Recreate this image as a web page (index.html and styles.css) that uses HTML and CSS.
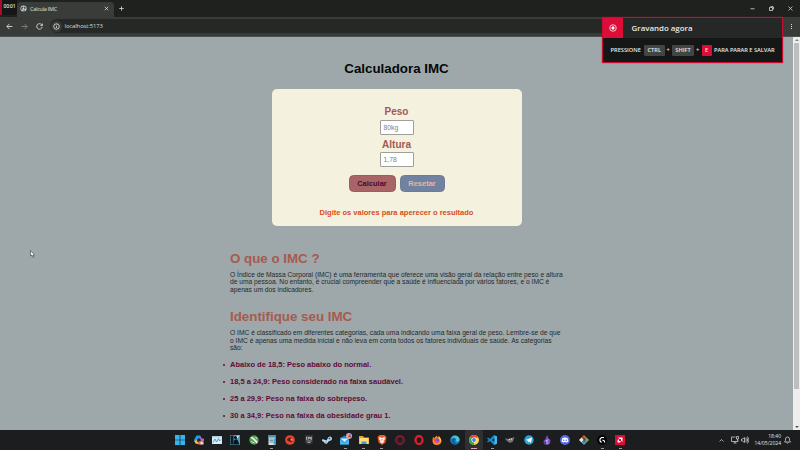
FILE: index.html
```html
<!DOCTYPE html>
<html lang="pt-BR">
<head>
<meta charset="utf-8">
<title>Calcula IMC</title>
<link rel="stylesheet" href="styles.css">
</head>
<body>
<div class="screen">
  <header class="tabs">
    <div class="profile"><span>00:01</span></div>
    <div class="tab">
      <svg class="globe" viewBox="0 0 16 16"><circle cx="8" cy="8" r="7" fill="#cfd2d4"/><path d="M3 5l4-2 1 3-3 2 1 3-2 1-2-4zM10 3l3 2v3l-3 1-1-3zM8 11l3-1-1 4-2 1z" fill="#4b4f52"/></svg>
      <span>Calcula IMC</span>
      <svg class="x" viewBox="0 0 10 10"><path d="M1.5 1.5l7 7m0-7l-7 7"/></svg>
    </div>
    <svg class="plus" viewBox="0 0 10 10"><path d="M5 .5v9M.5 5h9"/></svg>
    <div class="winctl">
      <svg viewBox="0 0 10 10"><path d="M1 5.5h8"/></svg>
      <svg viewBox="0 0 10 10"><path d="M1 3h6v6H1zM3 1h5l1 1v5"/></svg>
      <svg viewBox="0 0 10 10"><path d="M1 1l8 8m0-8L1 9"/></svg>
    </div>
  </header>
  <nav class="toolbar">
    <svg viewBox="0 0 12 12"><path d="M11 6H1.5M6 1.5L1.5 6 6 10.500"/></svg>
    <svg class="dim" viewBox="0 0 12 12"><path d="M1 6h9.500M6 1.500L10.500 6 6 10.500"/></svg>
    <svg viewBox="0 0 12 12"><path d="M10.500 7A4.700 4.700 0 1 1 9.500 2.800L10.800 4M10.900 1v3.500H7.500"/></svg>
    <div class="address">
      <div class="info"><svg viewBox="0 0 12 12"><circle cx="6" cy="6" r="4.700"/><path d="M6 5.500v3M6 3v1"/></svg></div>
      <span>localhost:5173</span>
    </div>
    <div class="menu"><i></i><i></i><i></i></div>
  </nav>
  <div class="viewport">
    <main class="page">
      <h1>Calculadora IMC</h1>
      <form class="card">
        <label>Peso</label>
        <div class="field">80kg</div>
        <label class="second">Altura</label>
        <div class="field">1,78</div>
        <div class="buttons">
          <button type="button" class="calc">Calcular</button>
          <button type="button" class="reset">Resetar</button>
        </div>
        <p class="result">Digite os valores para aperecer o resultado</p>
      </form>
      <section class="text">
        <h2>O que o IMC ?</h2>
        <p>O Índice de Massa Corporal (IMC) é uma ferramenta que oferece uma visão geral da relação entre peso e altura<br>de uma pessoa. No entanto, é crucial compreender que a saúde é influenciada por vários fatores, e o IMC é<br>apenas um dos indicadores.</p>
        <h2 class="identify">Identifique seu IMC</h2>
        <p>O IMC é classificado em diferentes categorias, cada uma indicando uma faixa geral de peso. Lembre-se de que<br>o IMC é apenas uma medida inicial e não leva em conta todos os fatores individuais de saúde. As categorias<br>são:</p>
        <ul>
          <li>Abaixo de 18,5: Peso abaixo do normal.</li>
          <li>18,5 a 24,9: Peso considerado na faixa saudável.</li>
          <li>25 a 29,9: Peso na faixa do sobrepeso.</li>
          <li>30 a 34,9: Peso na faixa da obesidade grau 1.</li>
          <li>35 a 39,9: Peso na faixa da obesidade grau 2.</li>
        </ul>
      </section>
    </main>
    <div class="scroll"><b class="up"></b><i></i><b class="down"></b></div>
  </div>
  <footer class="taskbar">
    <div class="apps">
      <div class="app"><svg viewBox="0 0 20 20"><path d="M0 0h9.300v9.300H0zM10.700 0H20v9.300h-9.300zM0 10.700h9.300V20H0zM10.700 10.700H20V20h-9.300z" fill="#36b4ee"/></svg></div>
      <div class="app"><svg viewBox="0 0 20 20"><path d="M5 1h7l3 6H8L5 14H1q-2-2 0-6z" fill="#219be8"/><path d="M12 1l3 6h4q2 2 0 6l-3 1-4-7z" fill="#b66bd8"/><path d="M1 12l5-2 4 8H6q-4 0-5-6z" fill="#f2bd35"/><path d="M9 12l6-1 4 1-3 7H8z" fill="#ef704c"/><path d="M8 8h4l-1 5H6z" fill="#24272a"/><path d="M13 14h6v5h-6z" fill="#e8d5cd"/></svg></div>
      <div class="app"><svg viewBox="0 0 20 20"><path d="M0 2h20v16H0z" fill="#d9edf5"/><path d="M0 2h20v3H0z" fill="#b4cfdf"/><path d="M2 15l4-7 3 6 4-7 2 5 3-3" fill="none" stroke="#2589bb" stroke-width="1.500"/></svg></div>
      <div class="app"><svg viewBox="0 0 20 20"><path d="M0 0h20v20H0z" fill="#4c9cb5"/><path d="M1 1h6v18H1z" fill="#101b22"/><path d="M7 19l1-8 4-3 3 2 4 9z" fill="#0a1219"/><circle cx="11" cy="5" r="3" fill="#111"/><path d="M13 2l5-1-3 6z" fill="#e8f3f6"/></svg></div>
      <div class="app"><svg viewBox="0 0 20 20"><circle cx="10" cy="10" r="9.500" fill="#4f9d50"/><path d="M2 5q6-3 9 2l7 7-3 3-6-7z" fill="#e8eee3"/><path d="M4 13l7 3m2-12l3 4" stroke="#d9ebd5" stroke-width="2"/></svg></div>
      <div class="app run"><svg viewBox="0 0 20 20"><path d="M3 0h14v20H3z" fill="#d3e3ec"/><path d="M3 0h14v5H3z" fill="#3d94bd"/><path d="M5 8h7M5 11h7M5 14h7" stroke="#5b7180" stroke-width="1.500"/><path d="M13 7h4v12h-4z" fill="#3ba3d2"/></svg></div>
      <div class="app"><svg viewBox="0 0 20 20"><circle cx="10" cy="10" r="9.700" fill="#e5442e"/><path d="M4 10q1-5 7-5l3 2q-4 0-4 3l5 3q-5 3-11-3" fill="#571b17"/><path d="M11 7l5 2-3 3z" fill="#ff9b63"/></svg></div>
      <div class="app"><svg viewBox="0 0 20 20"><path d="M2 0h16v16l-8 4-8-4z" fill="#313335"/><path d="M5 4v5m0-5h2M5 6h2M5 9h2M9 9V4h2v3H9M13 4v5M16 4h-1v5h1M5 12h10M7 15h6" fill="none" stroke="#eee" stroke-width="1.100"/></svg></div>
      <div class="app"><svg viewBox="0 0 20 20"><path d="M1 8l8 3 4-7q6-3 7 3 0 4-6 5l-4 5q-5 2-6-3L0 12z" fill="#bcdff4"/><circle cx="15" cy="7" r="2" fill="#326999"/><circle cx="8" cy="14" r="1.500" fill="#5c91bb"/></svg></div>
      <div class="app run"><svg viewBox="0 0 20 20"><path d="M0 6l9-5 9 5v13H0z" fill="#2286ce"/><path d="M1 7h16l-8 7z" fill="#e6f4fb"/><path d="M0 9l9 6 9-6v10H0z" fill="#43b8ef"/></svg><span class="badge">4</span></div>
      <div class="app run"><svg viewBox="0 0 20 20"><path d="M0 2h8l2 3h10v13H0z" fill="#e4a52e"/><path d="M1 6h18v12H1z" fill="#ffdb73"/><path d="M5 13h10v5H5z" fill="#3c9bd3"/></svg></div>
      <div class="app run"><svg viewBox="0 0 20 20"><path d="M5 0h10l4 4-2 11-7 5-7-5L1 4z" fill="#f05b2f"/><path d="M5 4l5 2 5-2 1 4-3 4 1 2-4 3-4-3 1-2-3-4z" fill="#fff2e9"/><path d="M8 8l2 1 2-1-2 4z" fill="#f05b2f"/></svg></div>
      <div class="app"><svg viewBox="0 0 20 20"><g fill="none" stroke="#951e3a"><circle cx="10" cy="10" r="8.500" stroke-width="2.500"/><ellipse cx="10" cy="10" rx="4.500" ry="7" stroke-width="1.500"/></g></svg></div>
      <div class="app"><svg viewBox="0 0 20 20"><ellipse cx="10" cy="10" rx="7" ry="8" fill="none" stroke="#e51b30" stroke-width="4.500"/></svg></div>
      <div class="app"><svg viewBox="0 0 20 20"><path d="M2 4l3 2 4-5 2 4 4-2 4 8q0 8-9 9Q0 20 1 9z" fill="#ff8b26"/><circle cx="10" cy="11" r="4.500" fill="#8949cf"/><path d="M2 6l8 2-3 3 5 2q-4 5-8 0z" fill="#ff513f"/><path d="M12 1l6 7v6l-4-7z" fill="#ffd245"/></svg></div>
      <div class="app"><svg viewBox="0 0 20 20"><circle cx="10" cy="10" r="9.500" fill="#1689cb"/><path d="M1 8q4-8 12-6 6 2 6 8-2 5-7 2 1-7-5-7-4 0-6 3" fill="#4fc2d1"/><path d="M3 10q4-5 9-1-5 1-2 6 4 3 7 1-7 7-13-1" fill="#155ba2"/></svg></div>
      <div class="app run active"><svg viewBox="0 0 20 20"><circle cx="10" cy="10" r="10" fill="#ffd04b"/><path d="M10 10L1.500 4.800A10 10 0 0 1 18.700 5H10z" fill="#e94238"/><path d="M1.500 4.800L10 14v6A10 10 0 0 1 1.500 4.800" fill="#31a853"/><circle cx="10" cy="10" r="5" fill="#fff"/><circle cx="10" cy="10" r="3.800" fill="#3e80dc"/></svg></div>
      <div class="app run"><svg viewBox="0 0 20 20"><path fill-rule="evenodd" d="M14 0l6 3v14l-6 3L6 12l-4 3-2-2 4-3-4-3 2-2 4 3zM15 6l-5 4 5 4z" fill="#168ed4"/><path d="M15 1l5 2v14l-5 3z" fill="#43b5ef"/></svg></div>
      <div class="app"><svg viewBox="0 0 20 20"><path d="M1 6l4 2 8-2 6-2-3 9-6 3-5-3-4-4z" fill="#77736c"/><circle cx="9" cy="9" r="1.500" fill="#ddd"/><circle cx="13" cy="8" r="1.500" fill="#ddd"/></svg></div>
      <div class="app"><svg viewBox="0 0 20 20"><circle cx="10" cy="10" r="9.500" fill="#2aa1da"/><path d="M3 10l13-5-2 11-4-3-2 2-1-4z" fill="#fff"/></svg></div>
      <div class="app"><svg viewBox="0 0 20 20"><path d="M10 0l3 7 4 3-1 7-5 3-7-2-1-6 4-4z" fill="#7953c4"/><path d="M7 11l7-3-4 6 4 2-6 2z" fill="#c0a6ef"/><path d="M4 13l5 1-2 5z" fill="#3f246d"/></svg></div>
      <div class="app"><svg viewBox="0 0 20 20"><circle cx="10" cy="10" r="10" fill="#5969e8"/><path d="M5 6q5-2 10 0l2 7-4 2-1-1H8l-1 1-4-2z" fill="#fff"/><circle cx="7.500" cy="10.500" r="1.500" fill="#5969e8"/><circle cx="12.500" cy="10.500" r="1.500" fill="#5969e8"/></svg></div>
      <div class="app"><svg viewBox="0 0 20 20"><path d="M10 0l5 5-5 5-5-5z" fill="#df5b43"/><path d="M5 5l5 5-5 5-5-5z" fill="#e8e8df"/><path d="M15 5l5 5-5 5-5-5z" fill="#71b45d"/><path d="M10 10l5 5-5 5-5-5z" fill="#5ba0c8"/><path d="M7 4l3 3v8m0-8l4 4" stroke="#222" stroke-width="1.500" fill="none"/></svg></div>
      <div class="app run"><svg viewBox="0 0 20 20"><circle cx="10" cy="10" r="10" fill="#050505"/><path d="M14 5H9l-3 3v4l3 3M11 10l4 2v3" fill="none" stroke="#fff" stroke-width="2.200"/></svg></div>
      <div class="app run"><svg viewBox="0 0 20 20"><path d="M0 0h20v20H0z" fill="#d90e35"/><path d="M6 5h9v9l-3-3V8H9zM5 10l3-2v4h4l-2 3H5z" fill="#fff"/></svg></div>
    </div>
    <div class="tray">
      <svg class="chev" viewBox="0 0 10 10"><path d="M1 7l4-4 4 4"/></svg>
      <svg class="net" viewBox="0 0 16 16"><path d="M9 2H1v9h13V8M5 14h6M8 11v3M11 1h4v5h-4zM13 6v3"/></svg>
      <svg class="vol" viewBox="0 0 16 16"><path d="M1 6h2l4-3v10l-4-3H1zM9 5q3 3 0 6M11 3q5 5 0 10M13 1q6 7 0 14"/></svg>
      <div class="clock">18:40<br>14/05/2024</div>
      <svg class="bell" viewBox="0 0 14 16"><path d="M1 12l2-3V6q0-4 4-4t4 4v3l2 3zM5 13q2 3 4 0"/></svg>
    </div>
  </footer>
  <aside class="recorder">
    <div class="rec-head">
      <div class="rec-icon"><svg viewBox="0 0 16 16"><circle cx="8" cy="8" r="6.500"/><circle cx="8" cy="8" r="2.500" fill="#fff"/></svg></div>
      <span>Gravando agora</span>
    </div>
    <div class="rec-body"><span class="press">PRESSIONE</span><kbd class="ctrl">CTRL</kbd><span class="sum">+</span><kbd class="shift">SHIFT</kbd><span class="sum">+</span><kbd class="key">E</kbd><span class="stop">PARA PARAR E SALVAR</span></div>
  </aside>
  <svg class="cursor" viewBox="0 0 10 16"><path d="M1 1v11l3-2 2 5 2-1-2-4h3z" fill="#fff" stroke="#222"/></svg>
</div>
</body>
</html>
```
FILE: styles.css
```css
* { box-sizing: border-box; }
body { margin: 0; overflow: hidden; }
h1, h2, p, ul { margin: 0; }
svg { display: block; flex: none; }
.screen { position: relative; width: 800px; height: 450px; display: flex; flex-direction: column; overflow: hidden; font-family: "Open Sans", "Noto Sans", sans-serif; }

.tabs { height: 17px; flex: none; display: flex; background: #1f211f; color: #dfe0df; }
.profile { width: 17px; height: 15px; border-left: 2px solid #a90d2d; border-radius: 0 0 4px 0; background: #151716; font-size: 5px; line-height: 12px; font-weight: 600; text-align: center; letter-spacing: -.2px; white-space: nowrap; }
.tab { width: 97px; height: 15px; margin-top: 2px; padding: 0 5px 2px 3px; border-radius: 4px 4px 0 0; background: #3a3c3a; display: flex; align-items: center; font-size: 5.500px; letter-spacing: -.25px; }
.globe { width: 7px; height: 7px; margin-right: 3px; }
.x { width: 5px; height: 5px; margin-left: auto; }
.x, .plus, .winctl svg { fill: none; stroke: #e0e1df; stroke-width: 1.500; }
.plus { width: 5px; height: 5px; margin: 6px 0 0 5px; }
.winctl { margin: 6px 7px 0 auto; display: flex; gap: 14px; }
.winctl svg { width: 5px; height: 5px; }

.toolbar { height: 20px; flex: none; display: flex; align-items: center; padding: 0 7px 1px 6px; gap: 8px; background: #393b39; border-bottom: 1px solid #4c504f; }
.toolbar svg { width: 7px; height: 7px; fill: none; stroke: #dcdedc; stroke-width: 1.500; }
.toolbar svg.dim { stroke: #858785; }
.address { flex: 1; height: 14px; border-radius: 7px; background: #262826; display: flex; align-items: center; gap: 2.500px; padding-left: 1px; color: #dadbda; font-size: 5.900px; letter-spacing: -.1px; margin-left: -1px; }
.info { width: 11px; height: 11px; border-radius: 50%; background: #393b39; display: grid; place-items: center; }
.menu { width: 3px; display: grid; gap: 1px; justify-items: center; }
.menu i { width: 1px; height: 1px; background: #ddd; }

.viewport { flex: 1; min-height: 0; display: flex; background: #9ea7a9; overflow: hidden; font-family: "Liberation Sans", Arial, sans-serif; }
.page { flex: 1; min-height: 0; padding-top: 24px; display: flex; flex-direction: column; align-items: center; }
.page > * { flex: none; }
h1 { color: #050708; font-size: 13.330px; line-height: 16px; }
.card { width: 250px; height: 137px; margin-top: 12px; padding-top: 17px; border-radius: 5px; background: #f4f1df; display: flex; flex-direction: column; align-items: center; }
.card label { color: #a15a58; font-weight: 700; font-size: 10px; line-height: 12px; }
.card label.second { margin-top: 4px; }
.field { width: 34px; height: 15px; margin-top: 1.500px; padding-left: 3px; border: 1px solid #a09f99; border-radius: 1px; background: #fff; color: #808186; font-size: 6.800px; line-height: 13px; }
.buttons { display: flex; gap: 4px; margin-top: 7.500px; }
button { height: 17px; padding: 0; border: 1px solid #6f6570; border-radius: 4.500px; font: 700 7.500px/15px "Liberation Sans", Arial, sans-serif; }
.calc { width: 47px; border-color: #9b5b5f; background: #a86466; color: #4b092d; }
.reset { width: 45px; border-color: #6d7b98; background: #7182a1; color: #e8b69d; }
.result { margin-top: 16px; color: #d94c21; font-size: 7.500px; font-weight: 700; line-height: 10px; }
.text { width: 333px; margin-top: 24.500px; white-space: nowrap; }
h2 { color: #a65b4e; font-size: 13.330px; line-height: 16px; }
.text p { margin-top: 4px; color: #222a2c; font-size: 6.680px; line-height: 7.600px; }
h2.identify { margin-top: 16px; }
ul { padding: 0; margin-top: 8px; list-style: none; }
li { position: relative; color: #610b35; font-weight: 700; font-size: 7.500px; line-height: 9px; margin-bottom: 8px; }
li::before { content: ""; position: absolute; left: -7px; top: 4px; width: 2px; height: 2px; border-radius: 50%; background: #610b35; }
.scroll { width: 7px; background: #eeefed; display: flex; flex-direction: column; align-items: center; padding: 2px 0; }
.scroll i { width: 5px; height: 346px; background: #bcbfbd; margin-top: 2px; }
.up, .down { border: 2px solid transparent; width: 0; height: 0; }
.up { border-bottom: 2px solid #888; border-top: 0; }
.down { border-top: 2px solid #555; border-bottom: 0; margin-top: auto; }

.taskbar { height: 20px; flex: none; display: flex; justify-content: space-between; background: #1b1d1f; padding: 0 9px 0 171px; color: #e2e3e3; }
.apps { display: grid; grid-template-columns: repeat(25, 18.350px); }
.app { position: relative; display: grid; place-items: center; border-radius: 2px; }
.app svg { width: 10px; height: 10px; }
.app.run::after { content: ""; position: absolute; bottom: 1.500px; width: 3px; height: 1px; background: #9b9d9f; }
.app.active { background: #303032; }
.app.active::after { width: 6px; background: #e4a6ac; }
.badge { position: absolute; right: 2px; top: 3px; width: 6px; height: 6px; border-radius: 50%; background: #e6a0ad; color: #3b1724; font-size: 4.500px; line-height: 6px; text-align: center; }
.tray { display: flex; align-items: center; }
.tray svg { fill: none; stroke: #e1e2e2; stroke-width: 1.400; }
.chev { width: 5px; height: 5px; margin-right: 7px; }
.net { width: 8px; height: 8px; margin-right: 2px; }
.vol { width: 8px; height: 8px; margin-right: 5px; }
.clock { width: 27px; text-align: right; font-size: 5px; line-height: 7px; margin-right: 3px; white-space: nowrap; }
.bell { width: 7px; height: 8px; }

.recorder { position: absolute; left: 602px; top: 17px; width: 181px; height: 46px; border: 1px solid #c70c31; background: #141716; color: #e9e9e8; box-shadow: 0 0 1px #c70c31; }
.rec-head { height: 20px; display: flex; align-items: center; background: #252827; font-weight: 600; font-size: 7.900px; padding-bottom: 0; }
.rec-icon { width: 20px; height: 20px; margin-right: 8.500px; background: #dc0d37; display: grid; place-items: center; }
.rec-icon svg { width: 8px; height: 8px; fill: none; stroke: #fff; stroke-width: 1.500; }
.rec-body { height: 24px; padding-left: 7.500px; display: flex; align-items: center; font-weight: 600; font-size: 5.700px; white-space: nowrap; }
.press { width: 33.500px; }
kbd { font: inherit; height: 11px; line-height: 11px; text-align: center; background: #414543; border-radius: 1px; }
.ctrl { width: 20.500px; }
.shift { width: 22px; }
.key { width: 10px; background: #dc0d37; }
.sum { width: 7.500px; text-align: center; }
.stop { margin-left: 2.500px; letter-spacing: -.05px; }
.cursor { position: absolute; left: 29.500px; top: 250px; width: 5px; height: 8px; }
```
